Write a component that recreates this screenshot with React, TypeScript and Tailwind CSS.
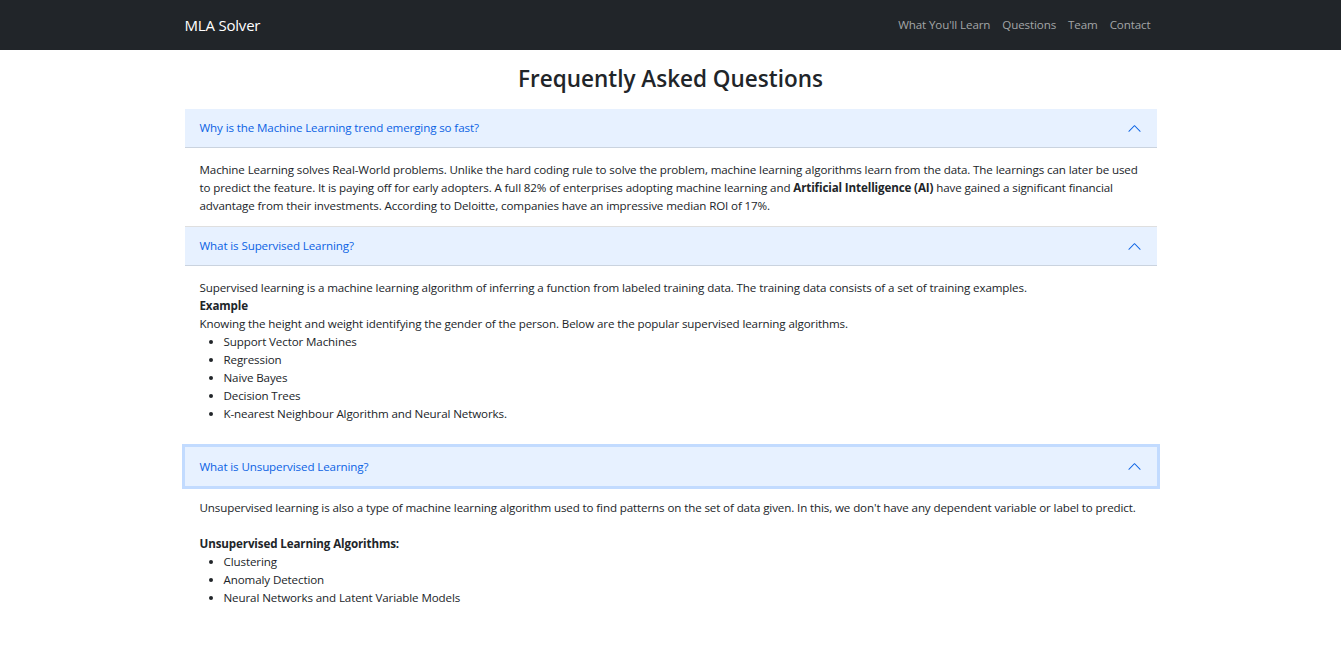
import React from "react";

const font = { fontFamily: "'Segoe UI', 'Open Sans', 'Noto Sans', sans-serif" };

function Chevron() {
  return (
    <svg viewBox="0 0 16 16" className="w-[15px] h-[15px] rotate-180 shrink-0" fill="#0c63e4">
      <path
        fillRule="evenodd"
        d="M1.646 4.646a.5.5 0 0 1 .708 0L8 10.293l5.646-5.647a.5.5 0 0 1 .708.708l-6 6a.5.5 0 0 1-.708 0l-6-6a.5.5 0 0 1 0-.708z"
      />
    </svg>
  );
}

function Header({ title, focused }: { title: string; focused?: boolean }) {
  return (
    <button
      className={
        focused
          ? "relative z-10 w-full h-[39px] flex items-center justify-between px-[15px] bg-[#e7f1ff] text-[#0c63e4] text-left shadow-[0_0_0_3px_#c2dbff]"
          : "w-full h-[39px] flex items-center justify-between px-[15px] bg-[#e7f1ff] text-[#0c63e4] text-left border-b border-[#cad3df]"
      }
    >
      <span>{title}</span>
      <Chevron />
    </button>
  );
}

export default function App() {
  return (
    <div className="min-h-screen bg-white text-[#212529]" style={font}>
      {/* Navbar */}
      <nav className="bg-[#212529] h-[50px]">
        <div className="w-[972px] mx-auto h-full flex items-center justify-between">
          <span className="text-white text-[15px] tracking-[-0.2px]">MLA Solver</span>
          <ul className="flex text-[11.6px] tracking-[-0.12px] text-[#a3a5a7]">
            <li className="px-[6px]">What You'll Learn</li>
            <li className="px-[6px]">Questions</li>
            <li className="px-[6px]">Team</li>
            <li className="px-[6px]">Contact</li>
          </ul>
        </div>
      </nav>

      <section className="w-[972px] mx-auto">
        <h2 className="text-center text-[22.5px] font-semibold leading-[29px] mt-[14px] mb-[16px]">
          Frequently Asked Questions
        </h2>

        <div className="text-[11.6px] tracking-[-0.12px] leading-[18px]">
          {/* Item 1 */}
          <div className="border-b border-[#dfdfdf]">
            <Header title="Why is the Machine Learning trend emerging so fast?" />
            <div className="px-[15px] pt-[13px] pb-[11px]">
              Machine Learning solves Real-World problems. Unlike the hard coding rule to solve the problem, machine
              learning algorithms learn from the data. The learnings can later be used to predict the feature. It is
              paying off for early adopters. A full 82% of enterprises adopting machine learning and{" "}
              <b className="leading-none">Artificial Intelligence (AI)</b> have gained a significant financial
              advantage from their investments. According to Deloitte, companies have an impressive median ROI of 17%.
            </div>
          </div>

          {/* Item 2 */}
          <div className="border-b border-[#dfdfdf]">
            <Header title="What is Supervised Learning?" />
            <div className="px-[15px] pt-[13px] pb-[11px]">
              Supervised learning is a machine learning algorithm of inferring a function from labeled training data.
              The training data consists of a set of training examples.
              <br />
              <b>Example</b>
              <br />
              Knowing the height and weight identifying the gender of the person. Below are the popular supervised
              learning algorithms.
              <ul className="list-disc pl-[24px] mb-[12px]">
                <li>Support Vector Machines</li>
                <li>Regression</li>
                <li>Naive Bayes</li>
                <li>Decision Trees</li>
                <li>K-nearest Neighbour Algorithm and Neural Networks.</li>
              </ul>
            </div>
          </div>

          {/* Item 3 */}
          <div>
            <Header title="What is Unsupervised Learning?" focused />
            <div className="px-[15px] pt-[13px] pb-[11px]">
              Unsupervised learning is also a type of machine learning algorithm used to find patterns on the set of
              data given. In this, we don't have any dependent variable or label to predict.
              <br />
              <br />
              <b>Unsupervised Learning Algorithms:</b>
              <ul className="list-disc pl-[24px] mb-[12px]">
                <li>Clustering</li>
                <li>Anomaly Detection</li>
                <li>Neural Networks and Latent Variable Models</li>
              </ul>
            </div>
          </div>
        </div>
      </section>
    </div>
  );
}
